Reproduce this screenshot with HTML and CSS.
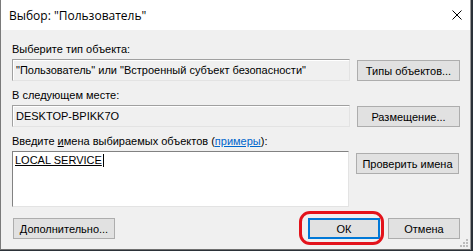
FILE: index.html
```html
<!DOCTYPE html>
<html lang="ru">
<head>
  <meta charset="utf-8"/>
  <title>Выбор: "Пользователь"</title>
  <link rel="stylesheet" href="styles.css">
</head>
<body>
  <div class="window">
    <div class="titlebar">
      <span class="title">Выбор: "Пользователь"</span>
      <svg class="close" width="10" height="10" viewBox="0 0 10 10"><path d="M0.5 0.5L9.5 9.5M9.5 0.5L0.5 9.5" stroke="#000" stroke-width="1"/></svg>
    </div>

    <div class="content">
      <div class="label">Выберите тип объекта:</div>
      <div class="row">
        <div class="field">"Пользователь" или "Встроенный субъект безопасности"</div>
        <button class="btn">Типы объектов...</button>
      </div>

      <div class="label">В следующем месте:</div>
      <div class="row">
        <div class="field">DESKTOP-BPIKK7O</div>
        <button class="btn">Размещение...</button>
      </div>

      <div class="label">Введите <u>и</u>мена выбираемых объектов (<a href="#">примеры</a>):</div>
      <div class="row top">
        <div class="names"><span class="resolved">LOCAL SERVICE</span><span class="caret"></span></div>
        <button class="btn">Проверить имена</button>
      </div>

      <div class="footer">
        <button class="btn wide">Дополнительно...</button>
        <div class="actions">
          <span class="highlight"><button class="btn ok">ОК</button></span>
          <button class="btn">Отмена</button>
        </div>
      </div>
    </div>

    <svg class="grip" width="8" height="8" viewBox="0 0 8 8">
      <rect x="6" y="0" width="2" height="2" fill="#bcbcbc"/>
      <rect x="3" y="3" width="2" height="2" fill="#bcbcbc"/>
      <rect x="6" y="3" width="2" height="2" fill="#bcbcbc"/>
      <rect x="0" y="6" width="2" height="2" fill="#bcbcbc"/>
      <rect x="3" y="6" width="2" height="2" fill="#bcbcbc"/>
      <rect x="6" y="6" width="2" height="2" fill="#bcbcbc"/>
    </svg>
  </div>
</body>
</html>
```

FILE: styles.css
```css
body { margin:0; background:#2b3138; font-family:"Liberation Sans", Arial, sans-serif; font-size:11px; color:#000; }

.window { position:relative; width:469px; height:249px; background:#f0f0f0; border-left:1px solid #7a7a7a; border-bottom:1px solid #6f6f6f; border-right:1px solid #9a9a9a; display:flex; flex-direction:column; }

.titlebar { height:30px; background:#fff; display:flex; align-items:center; justify-content:space-between; padding:0 8px 0 8px; }
.title { font-family:"Open Sans", "Noto Sans", sans-serif; font-size:12px; }
.close { margin-right:0; }

.content { padding:12px 9px 0 11px; display:flex; flex-direction:column; }
.label { height:14px; line-height:14px; margin-bottom:3px; }
.label a { color:#0066cc; }
.row { display:flex; align-items:center; gap:7px; margin-bottom:7px; }
.row.top { align-items:flex-start; }

.field { width:336px; height:20px; line-height:20px; padding-left:3px; border:1px solid; border-color:#a0a0a0 #e3e3e3 #e3e3e3 #a0a0a0; box-shadow:inset 1px 1px 0 #fff; white-space:nowrap; overflow:hidden; box-sizing:content-box; }
.row .field { width:333px; }

.btn { font-family:inherit; font-size:11px; color:#000; background:#e1e1e1; border:1px solid #adadad; width:103px; height:21px; padding:0; margin:0; }
.row .btn { margin-top:1px; }
.row.top .btn { margin-top:2px; }

.names { width:333px; height:52px; background:#fff; border:1px solid; border-color:#828282 #e3e3e3 #e3e3e3 #828282; padding:2px 0 0 2px; line-height:13px; }
.resolved { text-decoration:underline; }
.caret { display:inline-block; width:1px; height:13px; background:#000; vertical-align:top; margin-left:1px; }

.footer { display:flex; justify-content:space-between; align-items:center; margin-top:4px; }
.wide { width:102px; margin-left:1px; }
.actions { display:flex; gap:8px; margin-right:1px; }
.actions .btn { width:72px; }
.highlight { position:relative; display:inline-block; }
.highlight::after { content:""; position:absolute; left:-9px; right:-4px; top:-7px; bottom:-6px; border:3px solid #e3131b; border-radius:11px; }
.ok { border:2px solid #0078d7; }

.grip { position:absolute; right:2px; bottom:2px; }
```
